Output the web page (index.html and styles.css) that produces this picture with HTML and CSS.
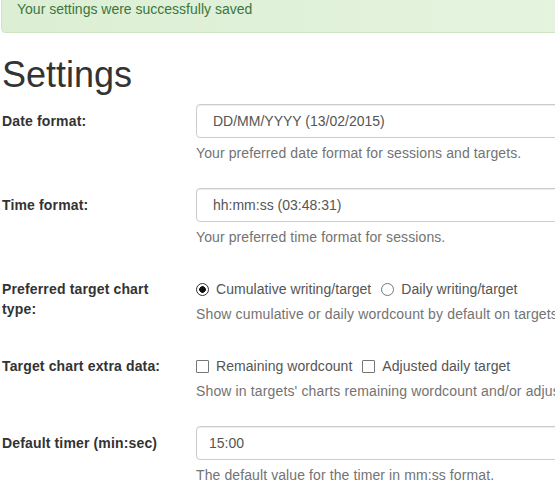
FILE: index.html
```html
<!DOCTYPE html>
<html lang="en">
<head>
<meta charset="utf-8">
<title>Settings</title>
<link rel="stylesheet" href="styles.css">
</head>
<body>
<div class="page">
  <div class="alert">Your settings were successfully saved</div>
  <h1 class="title">Settings</h1>
  <form class="form">
    <div class="group">
      <label class="label">Date format:</label>
      <div class="control">
        <div class="field field-select">DD/MM/YYYY (13/02/2015)</div>
        <p class="help">Your preferred date format for sessions and targets.</p>
      </div>
    </div>
    <div class="group">
      <label class="label">Time format:</label>
      <div class="control">
        <div class="field field-select">hh:mm:ss (03:48:31)</div>
        <p class="help">Your preferred time format for sessions.</p>
      </div>
    </div>
    <div class="group">
      <label class="label">Preferred target chart type:</label>
      <div class="control control-inline">
        <div class="options">
          <label class="option"><input type="radio" name="chart" class="radio" checked>Cumulative writing/target</label>
          <label class="option"><input type="radio" name="chart" class="radio">Daily writing/target</label>
        </div>
        <p class="help help-wide">Show cumulative or daily wordcount by default on targets' charts.</p>
      </div>
    </div>
    <div class="group">
      <label class="label">Target chart extra data:</label>
      <div class="control control-inline">
        <div class="options">
          <label class="option"><input type="checkbox" class="check">Remaining wordcount</label>
          <label class="option"><input type="checkbox" class="check">Adjusted daily target</label>
        </div>
        <p class="help help-wide">Show in targets' charts remaining wordcount and/or adjusted daily target.</p>
      </div>
    </div>
    <div class="group">
      <label class="label">Default timer (min:sec)</label>
      <div class="control">
        <div class="field">15:00</div>
        <p class="help">The default value for the timer in mm:ss format.</p>
      </div>
    </div>
  </form>
</div>
</body>
</html>
```
FILE: styles.css
```css
html, body {
  margin: 0;
  padding: 0;
  background: #fff;
  overflow: hidden;
}
body {
  font-family: "Liberation Sans", Arial, sans-serif;
  font-size: 14px;
  line-height: 20px;
  color: #333;
}
.page {
  width: 900px;
  margin-top: -17px;
  padding-left: 1px;
}
.alert {
  padding: 15px 15px 13px 15px;
  border: 1px solid #cfe6c4;
  border-radius: 4px;
  background: linear-gradient(to right, #dcefd4 0%, #e4f3de 60%, #eef7ea 100%);
  color: #3c763d;
  margin-bottom: 22px;
}
.title {
  margin: 0 0 9px 1px;
  font-size: 36px;
  line-height: 40px;
  font-weight: 500;
  color: #333;
}
.form {
  margin: 0;
}
.group {
  display: grid;
  grid-template-columns: 195px 1fr;
  margin-bottom: 15px;
}
.label {
  padding-top: 7px;
  padding-left: 1px;
  padding-right: 15px;
  font-weight: bold;
  letter-spacing: 0.15px;
  color: #333;
}
.field {
  height: 34px;
  box-sizing: border-box;
  border: 1px solid #ccc;
  border-radius: 4px;
  padding: 6px 12px;
  color: #555;
  box-shadow: inset 0 1px 1px rgba(0,0,0,.075);
  background: #fff;
}
.field-select {
  padding-left: 16px;
}
.help {
  margin: 5px 0 10px 0;
  color: #737373;
  letter-spacing: 0.1px;
}
.help-wide {
  letter-spacing: 0.14px;
}
.control-inline {
  padding-top: 7px;
}
.options {
  display: flex;
  gap: 10px;
}
.option {
  display: inline-flex;
  align-items: center;
  color: #555;
  letter-spacing: 0.05px;
}
.radio,
.check {
  appearance: none;
  -webkit-appearance: none;
  width: 13px;
  height: 13px;
  margin: 0 7px 0 0;
  box-sizing: border-box;
  border: 1px solid #767676;
  background: #fff;
}
.radio {
  border-radius: 50%;
}
.radio:checked {
  border-color: #333;
  background: radial-gradient(circle, #111 0, #111 3px, #fff 3.6px);
}
.check {
  border-radius: 1px;
}
```
